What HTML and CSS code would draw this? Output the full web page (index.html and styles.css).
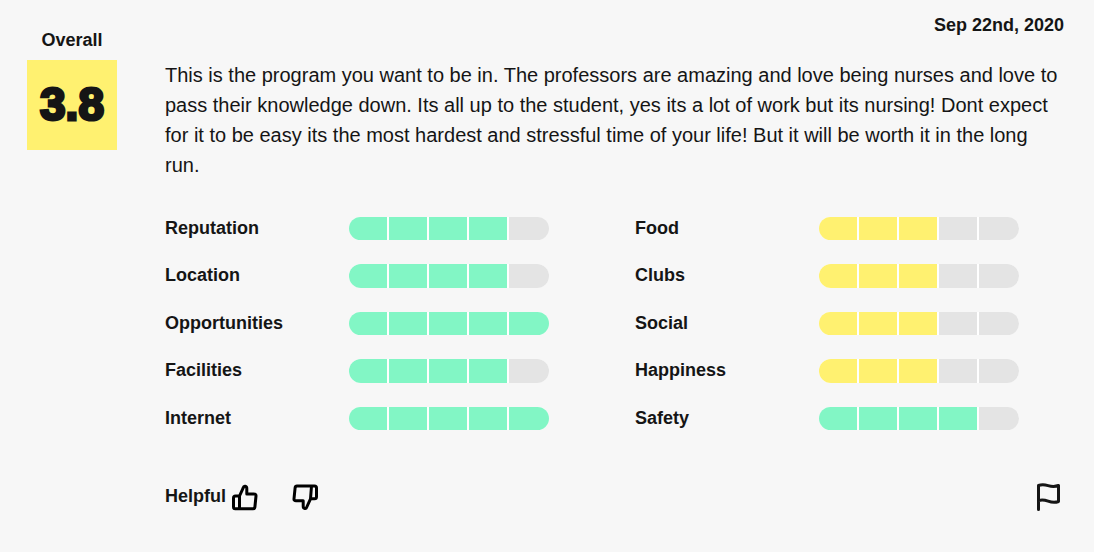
FILE: index.html
```
<!DOCTYPE html>
<html lang="en">
<head>
    <meta charset="UTF-8">
    <meta name="viewport" content="width=device-width, initial-scale=1.0">
    <title>School Rating</title>
    <link rel="stylesheet" href="styles.css">
</head>
<body>
    <article class="rating">
        <div class="overall">
            <div class="overall-label">Overall</div>
            <div class="overall-score">3.8</div>
        </div>

        <div class="rating-body">
            <time class="date" datetime="2020-09-22">Sep 22nd, 2020</time>

            <p class="comment">This is the program you want to be in. The professors are amazing and love being nurses and love to pass their knowledge down. Its all up to the student, yes its a lot of work but its nursing! Dont expect for it to be easy its the most hardest and stressful time of your life! But it will be worth it in the long run.</p>

            <div class="categories">
                <div class="category">
                    <span class="category-name">Reputation</span>
                    <div class="bar green" role="img" aria-label="4 out of 5"><i class="on"></i><i class="on"></i><i class="on"></i><i class="on"></i><i></i></div>
                </div>
                <div class="category">
                    <span class="category-name">Location</span>
                    <div class="bar green" role="img" aria-label="4 out of 5"><i class="on"></i><i class="on"></i><i class="on"></i><i class="on"></i><i></i></div>
                </div>
                <div class="category">
                    <span class="category-name">Opportunities</span>
                    <div class="bar green" role="img" aria-label="5 out of 5"><i class="on"></i><i class="on"></i><i class="on"></i><i class="on"></i><i class="on"></i></div>
                </div>
                <div class="category">
                    <span class="category-name">Facilities</span>
                    <div class="bar green" role="img" aria-label="4 out of 5"><i class="on"></i><i class="on"></i><i class="on"></i><i class="on"></i><i></i></div>
                </div>
                <div class="category">
                    <span class="category-name">Internet</span>
                    <div class="bar green" role="img" aria-label="5 out of 5"><i class="on"></i><i class="on"></i><i class="on"></i><i class="on"></i><i class="on"></i></div>
                </div>
                <div class="category">
                    <span class="category-name">Food</span>
                    <div class="bar yellow" role="img" aria-label="3 out of 5"><i class="on"></i><i class="on"></i><i class="on"></i><i></i><i></i></div>
                </div>
                <div class="category">
                    <span class="category-name">Clubs</span>
                    <div class="bar yellow" role="img" aria-label="3 out of 5"><i class="on"></i><i class="on"></i><i class="on"></i><i></i><i></i></div>
                </div>
                <div class="category">
                    <span class="category-name">Social</span>
                    <div class="bar yellow" role="img" aria-label="3 out of 5"><i class="on"></i><i class="on"></i><i class="on"></i><i></i><i></i></div>
                </div>
                <div class="category">
                    <span class="category-name">Happiness</span>
                    <div class="bar yellow" role="img" aria-label="3 out of 5"><i class="on"></i><i class="on"></i><i class="on"></i><i></i><i></i></div>
                </div>
                <div class="category">
                    <span class="category-name">Safety</span>
                    <div class="bar green" role="img" aria-label="4 out of 5"><i class="on"></i><i class="on"></i><i class="on"></i><i class="on"></i><i></i></div>
                </div>
            </div>

            <div class="actions">
                <span class="helpful">Helpful</span>
                <button type="button" class="icon-button" aria-label="Helpful">
                    <svg width="28" height="28" viewBox="0 0 28 28">
                        <path d="M8.500 13 12.200 4.800C12.800 2.400 15.800 3 15.800 5.500V11H23Q25.200 11 25 13L23.900 24Q23.700 25.800 22 25.800H4Q2.500 25.800 2.500 24V15Q2.500 13 4.500 13H8.500V25.800"/>
                    </svg>
                </button>
                <button type="button" class="icon-button" aria-label="Not helpful">
                    <svg width="28" height="28" viewBox="0 0 28 28">
                        <path d="M19.500 15.800 15.800 24C15.200 26.400 12.200 25.800 12.200 23.300V17.800H5Q2.800 17.800 3 15.800L4.100 4.800Q4.300 3 6 3H23.500Q25.500 3 25.500 5V13.800Q25.500 15.800 23.500 15.800H19.500L20.500 3"/>
                    </svg>
                </button>
                <button type="button" class="icon-button flag" aria-label="Report this rating">
                    <svg width="28" height="28" viewBox="0 0 28 28">
                        <path d="M4.500 26.500V2.500C13 -.5 15.500 6 24.500 2.500V18.500C15.500 22 13 14.500 4.500 17.500"/>
                    </svg>
                </button>
            </div>
        </div>
    </article>
</body>
</html>
```
FILE: styles.css
```
body {
    margin: 0;
    font-family: "Liberation Sans", Arial, sans-serif;
    background-color: #fff;
    color: #151515;
}

.rating {
    display: flex;
    gap: 48px;
    margin: 0 3px 2px 0;
    padding: 14px 30px 41px 27px;
    background-color: #f7f7f7;
}

.overall {
    flex: none;
    width: 90px;
    padding-top: 14px;
}

.overall-label {
    margin-bottom: 8px;
    font-size: 18px;
    font-weight: bold;
    line-height: 24px;
    text-align: center;
}

.overall-score {
    height: 90px;
    background-color: #fff170;
    font-size: 46px;
    font-weight: bold;
    line-height: 88px;
    text-align: center;
    -webkit-text-stroke: 3px #151515;
}

.rating-body {
    flex: 1;
    min-width: 0;
}

.date {
    display: block;
    font-size: 18px;
    font-weight: bold;
    line-height: 22px;
    text-align: right;
}

.comment {
    margin: 24px 0 37px;
    font-size: 20px;
    line-height: 30px;
}

.categories {
    display: grid;
    grid-template-columns: 1fr 1fr;
    grid-template-rows: repeat(5, auto);
    grid-auto-flow: column;
    gap: 24px 41px;
}

.category {
    display: flex;
    font-size: 18px;
    font-weight: bold;
    line-height: 1.3;
}

.category-name {
    flex: none;
    width: 184px;
}

.bar {
    display: flex;
    gap: 2px;
    width: 200px;
    border-radius: 12px;
    background-color: #fff;
    overflow: hidden;
}

.bar i {
    width: 38px;
    background-color: #e4e4e4;
}

.bar i:last-child {
    flex: 1;
}

.green .on {
    background-color: #82f6c5;
}

.yellow .on {
    background-color: #fff170;
}

.actions {
    display: flex;
    align-items: center;
    margin-top: 53px;
    font-size: 18px;
    font-weight: bold;
}

.helpful {
    margin-right: 5px;
}

.icon-button {
    margin: 0 32px 0 0;
    padding: 0;
    border: 0;
    background: none;
    cursor: pointer;
}

.icon-button.flag {
    margin: 0 2px 0 auto;
}

.icon-button svg {
    display: block;
    fill: none;
    stroke: #000;
    stroke-width: 3;
    stroke-linecap: round;
    stroke-linejoin: round;
}

.icon-button.flag svg {
    stroke: #151515;
}
```
